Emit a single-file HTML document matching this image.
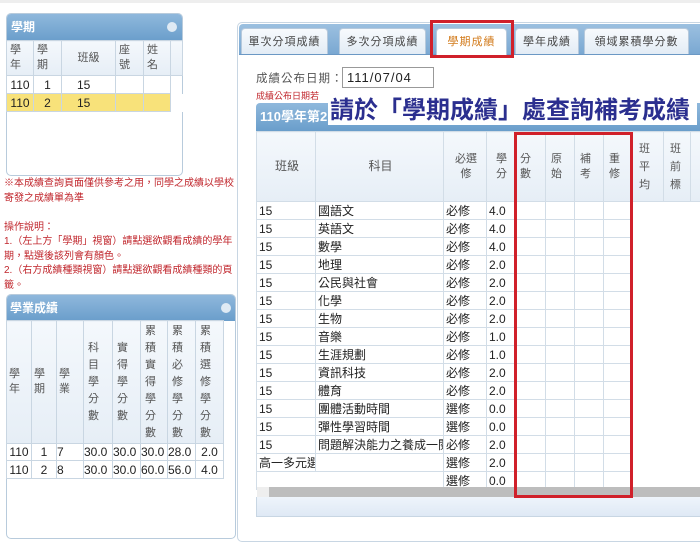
<!DOCTYPE html>
<html><head><meta charset="utf-8">
<style>
*{margin:0;padding:0;box-sizing:border-box}
body{width:700px;height:532px;overflow:hidden;background:#fff;font-family:"Liberation Sans","Noto Sans CJK TC",sans-serif;position:relative;color:#222}
.abs{position:absolute}
.hdr{background:linear-gradient(#8fb8dc,#6a9ecb);color:#fff;font-weight:bold;font-size:12px}
table{border-collapse:collapse;position:absolute;table-layout:fixed}
td{border:1px solid #c9d6e2;font-size:12px;overflow:hidden;white-space:nowrap}
.th td{background:linear-gradient(#f4f8fc,#e6eef6);color:#555;font-size:11px;line-height:15px}
.red{color:#c0262c;font-size:10px;line-height:14.5px}
.tab{position:absolute;top:28px;height:26px;background:linear-gradient(#f7fafd,#e3ecf5);border:1px solid #b6c9dc;border-bottom:none;border-radius:4px 4px 0 0;font-size:11px;color:#444;text-align:center;line-height:26px;letter-spacing:1px}
.g td{border-color:#d2dde7;padding-left:2px}
</style></head><body>
<div class="abs" style="left:0;top:0;width:700px;height:3px;background:#eee"></div>

<div class="abs" style="left:6px;top:13px;width:177px;height:163px;border:1px solid #b8cbdc;border-radius:5px;overflow:hidden">
 <div class="hdr" style="height:27px;line-height:27px;padding-left:4px">學期<span style="position:absolute;right:5px;top:8px;width:10px;height:10px;border-radius:50%;background:#dfeaf4"></span></div>
</div>
<table style="left:6px;top:40px;width:176px">
<colgroup><col style="width:27px"><col style="width:28px"><col style="width:54px"><col style="width:28px"><col style="width:27px"><col style="width:12px"></colgroup>
<tr class="th" style="height:35px"><td style="padding-left:3px">學<br>年</td><td style="padding-left:3px">學<br>期</td><td style="text-align:center">班級</td><td style="padding-left:3px">座<br>號</td><td style="padding-left:3px">姓<br>名</td><td></td></tr>
<tr style="height:18px"><td style="text-align:center">110</td><td style="text-align:center">1</td><td style="padding-left:15px">15</td><td></td><td></td><td style="border:none"></td></tr>
<tr style="height:18px;background:#f8e27a"><td style="text-align:center">110</td><td style="text-align:center">2</td><td style="padding-left:15px">15</td><td></td><td></td><td style="border:none;background:#fff"></td></tr>
</table>

<div class="abs red" style="left:4px;top:177px;width:234px">※本成績查詢頁面僅供參考之用，同學之成績以學校寄發之成績單為準<br><br>操作說明：<br>1.（左上方「學期」視窗）請點選欲觀看成績的學年期，點選後該列會有顏色。<br>2.（右方成績種類視窗）請點選欲觀看成績種類的頁籤。</div>

<div class="abs" style="left:6px;top:294px;width:230px;height:245px;border:1px solid #b8cbdc;border-radius:5px;overflow:hidden">
 <div class="hdr" style="height:26px;line-height:26px;padding-left:3px">學業成績<span style="position:absolute;right:4px;top:8px;width:10px;height:10px;border-radius:50%;background:#dfeaf4"></span></div>
</div>
<table style="left:6px;top:320px;width:217px">
<colgroup><col style="width:25px"><col style="width:25px"><col style="width:27px"><col style="width:29px"><col style="width:28px"><col style="width:27px"><col style="width:28px"><col style="width:28px"></colgroup>
<tr class="th" style="height:123px"><td style="padding-left:2px">學<br>年</td><td style="padding-left:2px">學<br>期</td><td style="padding-left:2px">學<br>業</td><td style="padding-left:4px;line-height:17px">科<br>目<br>學<br>分<br>數</td><td style="padding-left:4px;line-height:17px">實<br>得<br>學<br>分<br>數</td><td style="padding-left:4px;line-height:17px">累<br>積<br>實<br>得<br>學<br>分<br>數</td><td style="padding-left:4px;line-height:17px">累<br>積<br>必<br>修<br>學<br>分<br>數</td><td style="padding-left:4px;line-height:17px">累<br>積<br>選<br>修<br>學<br>分<br>數</td></tr>
<tr style="height:17px"><td style="text-align:center">110</td><td style="text-align:center">1</td><td>7</td><td>30.0</td><td>30.0</td><td>30.0</td><td>28.0</td><td style="text-align:center">2.0</td></tr>
<tr style="height:18px"><td style="text-align:center">110</td><td style="text-align:center">2</td><td>8</td><td>30.0</td><td>30.0</td><td>60.0</td><td>56.0</td><td style="text-align:center">4.0</td></tr>
</table>

<div class="abs" style="left:237px;top:22px;width:470px;height:520px;border:1px solid #c8d6e3;border-radius:5px"></div>
<div class="abs" style="left:239px;top:24px;width:470px;height:31px;background:linear-gradient(#9cc0e0,#7aa8d2);border-radius:4px 0 0 0;border-bottom:1px solid #6b98c4"></div>
<div class="tab" style="left:241px;width:87px">單次分項成績</div>
<div class="tab" style="left:339px;width:87px">多次分項成績</div>
<div class="tab" style="left:436px;width:71px;background:#fff;color:#d27a1a;height:28px">學期成績</div>
<div class="tab" style="left:515px;width:64px">學年成績</div>
<div class="tab" style="left:584px;width:105px">領域累積學分數</div>
<div class="abs" style="left:430px;top:20px;width:84px;height:38px;border:3px solid #d0202a"></div>

<div class="abs" style="left:256px;top:70px;font-size:11.5px;color:#555;letter-spacing:1px">成績公布日期：</div>
<div class="abs" style="left:342px;top:67px;width:92px;height:21px;border:1px solid #999;font-size:13px;line-height:19px;padding-left:4px;letter-spacing:1px">111/07/04</div>
<div class="abs red" style="left:256px;top:89px;font-size:9px">成績公布日期若</div>

<div class="abs hdr" style="left:256px;top:103px;width:450px;height:28px;line-height:28px;padding-left:4px;font-size:13px;border-radius:4px 0 0 0">110學年第2</div>
<div class="abs" style="left:328px;top:97px;width:369px;height:28px;background:#fff;color:#2b2f8f;font-weight:bold;font-size:24px;line-height:28px;padding-left:2px;white-space:nowrap">請於「學期成績」處查詢補考成績</div>

<table class="g" style="left:256px;top:131px;width:460px">
<colgroup><col style="width:59px"><col style="width:128px"><col style="width:43px"><col style="width:28px"><col style="width:31px"><col style="width:29px"><col style="width:29px"><col style="width:29px"><col style="width:31px"><col style="width:27px"><col style="width:26px"></colgroup>
<tr class="th" style="height:70px"><td style="text-align:center;font-size:12px">班級</td><td style="text-align:center;font-size:12px">科目</td><td style="text-align:center">必選<br>修</td><td style="text-align:center">學<br>分</td><td style="padding-left:5px">分<br>數</td><td style="padding-left:5px">原<br>始</td><td style="padding-left:5px">補<br>考</td><td style="padding-left:5px">重<br>修</td><td style="padding-left:6px;line-height:18px">班<br>平<br>均</td><td style="padding-left:6px;line-height:18px">班<br>前<br>標</td><td></td></tr>
<tr style="height:18px"><td>15</td><td>國語文</td><td>必修</td><td>4.0</td><td></td><td></td><td></td><td></td><td style="border:none"></td><td style="border:none"></td><td style="border:none"></td></tr>
<tr style="height:18px"><td>15</td><td>英語文</td><td>必修</td><td>4.0</td><td></td><td></td><td></td><td></td><td style="border:none"></td><td style="border:none"></td><td style="border:none"></td></tr>
<tr style="height:18px"><td>15</td><td>數學</td><td>必修</td><td>4.0</td><td></td><td></td><td></td><td></td><td style="border:none"></td><td style="border:none"></td><td style="border:none"></td></tr>
<tr style="height:18px"><td>15</td><td>地理</td><td>必修</td><td>2.0</td><td></td><td></td><td></td><td></td><td style="border:none"></td><td style="border:none"></td><td style="border:none"></td></tr>
<tr style="height:18px"><td>15</td><td>公民與社會</td><td>必修</td><td>2.0</td><td></td><td></td><td></td><td></td><td style="border:none"></td><td style="border:none"></td><td style="border:none"></td></tr>
<tr style="height:18px"><td>15</td><td>化學</td><td>必修</td><td>2.0</td><td></td><td></td><td></td><td></td><td style="border:none"></td><td style="border:none"></td><td style="border:none"></td></tr>
<tr style="height:18px"><td>15</td><td>生物</td><td>必修</td><td>2.0</td><td></td><td></td><td></td><td></td><td style="border:none"></td><td style="border:none"></td><td style="border:none"></td></tr>
<tr style="height:18px"><td>15</td><td>音樂</td><td>必修</td><td>1.0</td><td></td><td></td><td></td><td></td><td style="border:none"></td><td style="border:none"></td><td style="border:none"></td></tr>
<tr style="height:18px"><td>15</td><td>生涯規劃</td><td>必修</td><td>1.0</td><td></td><td></td><td></td><td></td><td style="border:none"></td><td style="border:none"></td><td style="border:none"></td></tr>
<tr style="height:18px"><td>15</td><td>資訊科技</td><td>必修</td><td>2.0</td><td></td><td></td><td></td><td></td><td style="border:none"></td><td style="border:none"></td><td style="border:none"></td></tr>
<tr style="height:18px"><td>15</td><td>體育</td><td>必修</td><td>2.0</td><td></td><td></td><td></td><td></td><td style="border:none"></td><td style="border:none"></td><td style="border:none"></td></tr>
<tr style="height:18px"><td>15</td><td>團體活動時間</td><td>選修</td><td>0.0</td><td></td><td></td><td></td><td></td><td style="border:none"></td><td style="border:none"></td><td style="border:none"></td></tr>
<tr style="height:18px"><td>15</td><td>彈性學習時間</td><td>選修</td><td>0.0</td><td></td><td></td><td></td><td></td><td style="border:none"></td><td style="border:none"></td><td style="border:none"></td></tr>
<tr style="height:18px"><td>15</td><td>問題解決能力之養成一閱</td><td>必修</td><td>2.0</td><td></td><td></td><td></td><td></td><td style="border:none"></td><td style="border:none"></td><td style="border:none"></td></tr>
<tr style="height:18px"><td>高一多元選</td><td></td><td>選修</td><td>2.0</td><td></td><td></td><td></td><td></td><td style="border:none"></td><td style="border:none"></td><td style="border:none"></td></tr>
<tr style="height:18px"><td style="border-right:none"></td><td style="border-left:none"></td><td>選修</td><td>0.0</td><td></td><td></td><td></td><td></td><td style="border:none"></td><td style="border:none"></td><td style="border:none"></td></tr>
</table>
<div class="abs" style="left:257px;top:487px;width:445px;height:10px;background:#bdbdbd;border-left:12px solid #eee"></div>
<div class="abs" style="left:256px;top:497px;width:446px;height:20px;background:linear-gradient(#eef4fb,#dfe9f5);border:1px solid #c8d6e3;border-top:none"></div>
<div class="abs" style="left:514px;top:132px;width:119px;height:366px;border:3px solid #d0202a"></div>
</body></html>
